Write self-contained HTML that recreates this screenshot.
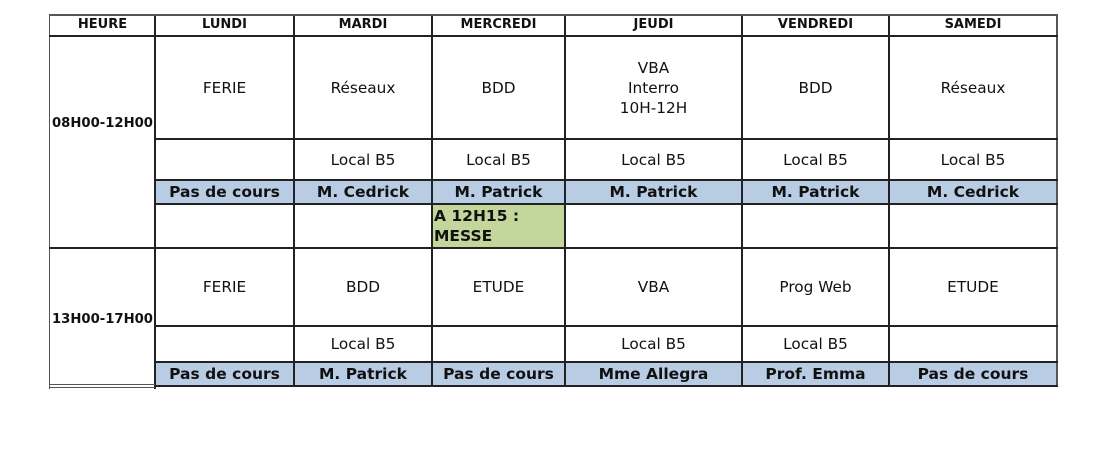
<!DOCTYPE html>
<html><head><meta charset="utf-8"><style>
body{margin:0;width:1103px;height:452px;background:#fff;position:relative;overflow:hidden;font-family:"DejaVu Sans","Liberation Sans",sans-serif;color:#111}
.c{position:absolute;display:flex;align-items:center;justify-content:center;text-align:center;font-size:15.3px;line-height:20px;box-sizing:border-box}
.h{font-weight:bold;font-size:13px}
.b{background:#b8cce4;font-weight:bold}
.n{font-weight:bold;font-size:15.5px}
.g{background:#c3d69b}
.v{position:absolute;width:2px;background:#222}
.hl{position:absolute;height:2px;background:#222}
</style></head><body>
<div class="c b" style="left:155px;top:180px;width:902px;height:24px"></div>
<div class="c b" style="left:155px;top:362px;width:902px;height:24px"></div>
<div class="c g" style="left:432px;top:204px;width:133px;height:44px"></div>

<div class="c h" style="left:50px;top:14px;width:105px;height:22px">HEURE</div>
<div class="c h" style="left:155px;top:14px;width:139px;height:22px">LUNDI</div>
<div class="c h" style="left:294px;top:14px;width:138px;height:22px">MARDI</div>
<div class="c h" style="left:432px;top:14px;width:133px;height:22px">MERCREDI</div>
<div class="c h" style="left:565px;top:14px;width:177px;height:22px">JEUDI</div>
<div class="c h" style="left:742px;top:14px;width:147px;height:22px">VENDREDI</div>
<div class="c h" style="left:889px;top:14px;width:168px;height:22px">SAMEDI</div>

<div class="c" style="left:50px;top:40px;width:105px;height:168px;font-weight:bold;font-size:13.2px;justify-content:flex-start;padding-left:2px">08H00-12H00</div>
<div class="c" style="left:50px;top:251px;width:105px;height:138px;font-weight:bold;font-size:13.2px;justify-content:flex-start;padding-left:2px">13H00-17H00</div>

<div class="c" style="left:155px;top:36px;width:139px;height:103px">FERIE</div>
<div class="c" style="left:294px;top:36px;width:138px;height:103px">Réseaux</div>
<div class="c" style="left:432px;top:36px;width:133px;height:103px">BDD</div>
<div class="c" style="left:565px;top:36px;width:177px;height:103px">VBA<br>Interro<br>10H-12H</div>
<div class="c" style="left:742px;top:36px;width:147px;height:103px">BDD</div>
<div class="c" style="left:889px;top:36px;width:168px;height:103px">Réseaux</div>

<div class="c" style="left:294px;top:139px;width:138px;height:41px">Local B5</div>
<div class="c" style="left:432px;top:139px;width:133px;height:41px">Local B5</div>
<div class="c" style="left:565px;top:139px;width:177px;height:41px">Local B5</div>
<div class="c" style="left:742px;top:139px;width:147px;height:41px">Local B5</div>
<div class="c" style="left:889px;top:139px;width:168px;height:41px">Local B5</div>

<div class="c n" style="left:155px;top:180px;width:139px;height:24px">Pas de cours</div>
<div class="c n" style="left:294px;top:180px;width:138px;height:24px">M. Cedrick</div>
<div class="c n" style="left:432px;top:180px;width:133px;height:24px">M. Patrick</div>
<div class="c n" style="left:565px;top:180px;width:177px;height:24px">M. Patrick</div>
<div class="c n" style="left:742px;top:180px;width:147px;height:24px">M. Patrick</div>
<div class="c n" style="left:889px;top:180px;width:168px;height:24px">M. Cedrick</div>

<div class="c n" style="left:433px;top:205px;width:132px;height:42px;text-align:left;justify-content:flex-start;align-items:flex-start;line-height:20px;padding-left:1px;padding-top:1px">A 12H15 :<br>MESSE</div>

<div class="c" style="left:155px;top:248px;width:139px;height:78px">FERIE</div>
<div class="c" style="left:294px;top:248px;width:138px;height:78px">BDD</div>
<div class="c" style="left:432px;top:248px;width:133px;height:78px">ETUDE</div>
<div class="c" style="left:565px;top:248px;width:177px;height:78px">VBA</div>
<div class="c" style="left:742px;top:248px;width:147px;height:78px">Prog Web</div>
<div class="c" style="left:889px;top:248px;width:168px;height:78px">ETUDE</div>

<div class="c" style="left:294px;top:326px;width:138px;height:36px">Local B5</div>
<div class="c" style="left:565px;top:326px;width:177px;height:36px">Local B5</div>
<div class="c" style="left:742px;top:326px;width:147px;height:36px">Local B5</div>

<div class="c n" style="left:155px;top:362px;width:139px;height:24px">Pas de cours</div>
<div class="c n" style="left:294px;top:362px;width:138px;height:24px">M. Patrick</div>
<div class="c n" style="left:432px;top:362px;width:133px;height:24px">Pas de cours</div>
<div class="c n" style="left:565px;top:362px;width:177px;height:24px">Mme Allegra</div>
<div class="c n" style="left:742px;top:362px;width:147px;height:24px">Prof. Emma</div>
<div class="c n" style="left:889px;top:362px;width:168px;height:24px">Pas de cours</div>

<div class="v" style="left:49px;top:14px;height:375px;width:1px;background:#555"></div>
<div class="v" style="left:154px;top:14px;height:375px"></div>
<div class="v" style="left:293px;top:14px;height:373px"></div>
<div class="v" style="left:431px;top:14px;height:373px"></div>
<div class="v" style="left:564px;top:14px;height:373px"></div>
<div class="v" style="left:741px;top:14px;height:373px"></div>
<div class="v" style="left:888px;top:14px;height:373px"></div>
<div class="v" style="left:1056px;top:14px;height:373px;background:#555"></div>

<div class="hl" style="left:49px;top:14px;width:1009px;background:#555"></div>
<div class="hl" style="left:49px;top:35px;width:1009px"></div>
<div class="hl" style="left:154px;top:138px;width:904px"></div>
<div class="hl" style="left:154px;top:179px;width:904px"></div>
<div class="hl" style="left:154px;top:203px;width:904px"></div>
<div class="hl" style="left:49px;top:247px;width:1009px"></div>
<div class="hl" style="left:154px;top:325px;width:904px"></div>
<div class="hl" style="left:154px;top:361px;width:904px"></div>
<div class="hl" style="left:154px;top:385px;width:904px"></div>
<div class="hl" style="left:49px;top:384px;width:106px;height:1px;background:#555"></div>
<div class="hl" style="left:49px;top:387px;width:106px;height:1px;background:#555"></div>
</body></html>
